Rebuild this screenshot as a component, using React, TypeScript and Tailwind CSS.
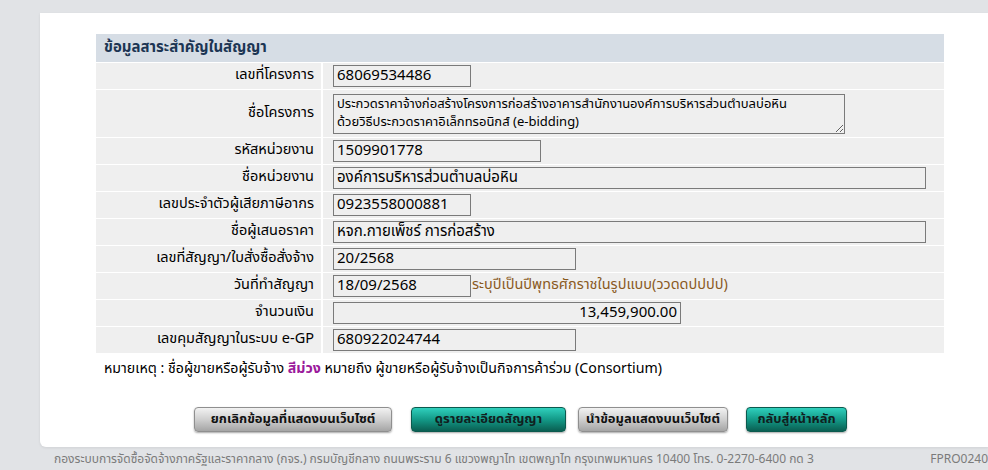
import React from 'react';

const font = { fontFamily: 'Tahoma, "Noto Sans Thai", "Noto Sans", "DejaVu Sans", sans-serif' };

type Field = {
  label: string;
  value: string;
  width: string;
  right?: boolean;
  hint?: string;
};

const fields: Field[] = [
  { label: 'เลขที่โครงการ', value: '68069534486', width: 'w-[138px]' },
  { label: 'รหัสหน่วยงาน', value: '1509901778', width: 'w-[208px]' },
  { label: 'ชื่อหน่วยงาน', value: 'องค์การบริหารส่วนตำบลบ่อหิน', width: 'w-[593px]' },
  { label: 'เลขประจำตัวผู้เสียภาษีอากร', value: '0923558000881', width: 'w-[138px]' },
  { label: 'ชื่อผู้เสนอราคา', value: 'หจก.กายเพ็ชร์ การก่อสร้าง', width: 'w-[593px]' },
  { label: 'เลขที่สัญญา/ใบสั่งซื้อสั่งจ้าง', value: '20/2568', width: 'w-[243px]' },
  { label: 'วันที่ทำสัญญา', value: '18/09/2568', width: 'w-[138px]', hint: 'ระบุปีเป็นปีพุทธศักราชในรูปแบบ(ววดดปปปป)' },
  { label: 'จำนวนเงิน', value: '13,459,900.00', width: 'w-[348px]', right: true },
  { label: 'เลขคุมสัญญาในระบบ e-GP', value: '680922024744', width: 'w-[243px]' },
];

const Row = ({ label, children, tall }: { label: string; children: React.ReactNode; tall?: boolean }) => (
  <div className={`flex gap-[2px] ${tall ? 'h-[47px]' : 'h-[26px]'}`}>
    <div className="w-[225px] shrink-0 bg-[#efefef] flex items-center justify-end pr-[7px] text-[14.5px] text-black whitespace-nowrap">
      {label}
    </div>
    <div className="flex-1 bg-[#efefef] flex items-center pl-[10px]">{children}</div>
  </div>
);

const FieldBox = ({ f }: { f: Field }) => (
  <>
    <input
      readOnly
      value={f.value}
      style={font}
      className={`${f.width} h-[22px] border border-[#7a7a7a] bg-[#efefef] px-[3px] text-[15px] text-black outline-none ${f.right ? 'text-right' : ''}`}
    />
    {f.hint && <span className="text-[14.5px] text-[#8a5a1e] ml-[1px] whitespace-nowrap">{f.hint}</span>}
  </>
);

const Btn = ({ label, teal, w }: { label: string; teal?: boolean; w: string }) => (
  <button
    style={font}
    className={`${w} h-[25px] shrink-0 rounded-[4px] text-[13px] font-bold shadow-[0_1px_2px_rgba(0,0,0,0.35)] ${
      teal
        ? 'bg-gradient-to-b from-[#2fd0bd] via-[#139a88] to-[#0a5f52] border border-[#0b5a4e] text-[#10201e]'
        : 'bg-gradient-to-b from-[#f2f2f2] via-[#cfcfcf] to-[#a5a5a5] border border-[#8f8f8f] text-[#111]'
    }`}
  >
    {label}
  </button>
);

export default function App() {
  const [first, ...rest] = fields;
  return (
    <div style={font} className="w-full h-[470px] bg-[#e1e3e6] pt-[13px] flex flex-col overflow-hidden">
      <div className="ml-[40px] h-[434px] bg-white rounded-bl-[6px] shadow-[0_1px_3px_rgba(0,0,0,0.08)] pt-[21px] pl-[56px] flex flex-col">
        {/* contract summary table */}
        <div className="w-[848px] flex flex-col gap-px bg-white">
          <div className="h-[28px] bg-[#d6dde5] flex items-center pl-[8px] text-[15px] font-bold text-[#1c3553]">
            ข้อมูลสาระสำคัญในสัญญา
          </div>
          <Row label={first.label}>
            <FieldBox f={first} />
          </Row>
          <Row label="ชื่อโครงการ" tall>
            <textarea
              readOnly
              style={font}
              className="w-[512px] h-[40px] border border-[#7a7a7a] bg-[#efefef] px-[3px] py-0 text-[13px] leading-[18px] text-black outline-none resize"
              value={'ประกวดราคาจ้างก่อสร้างโครงการก่อสร้างอาคารสำนักงานองค์การบริหารส่วนตำบลบ่อหิน\nด้วยวิธีประกวดราคาอิเล็กทรอนิกส์ (e-bidding)'}
            />
          </Row>
          {rest.map((f) => (
            <Row key={f.label} label={f.label}>
              <FieldBox f={f} />
            </Row>
          ))}
        </div>
        <p className="h-[24px] mt-[4px] ml-[8px] flex items-center text-[14.2px] text-black whitespace-nowrap">
          หมายเหตุ : ชื่อผู้ขายหรือผู้รับจ้าง&nbsp;<span className="text-[#9b1a9b] font-bold">สีม่วง</span>&nbsp;หมายถึง ผู้ขายหรือผู้รับจ้างเป็นกิจการค้าร่วม (Consortium)
        </p>
        <div className="mt-[26px] ml-[98px] flex items-center">
          <Btn label="ยกเลิกข้อมูลที่แสดงบนเว็บไซต์" w="w-[198px]" />
          <div className="w-[19px]" />
          <Btn label="ดูรายละเอียดสัญญา" teal w="w-[155px]" />
          <div className="w-[12px]" />
          <Btn label="นำข้อมูลแสดงบนเว็บไซต์" w="w-[150px]" />
          <div className="w-[18px]" />
          <Btn label="กลับสู่หน้าหลัก" teal w="w-[101px]" />
        </div>
      </div>
      <footer className="flex-1 flex items-center justify-between pl-[54px] text-[12px] text-[#7b7b7b]">
        <span>
          กองระบบการจัดซื้อจัดจ้างภาครัฐและราคากลาง (กจร.) กรมบัญชีกลาง ถนนพระราม 6 แขวงพญาไท เขตพญาไท กรุงเทพมหานคร 10400 โทร. 0-2270-6400 กด 3
        </span>
        <span className="whitespace-nowrap">FPRO0240</span>
      </footer>
    </div>
  );
}
